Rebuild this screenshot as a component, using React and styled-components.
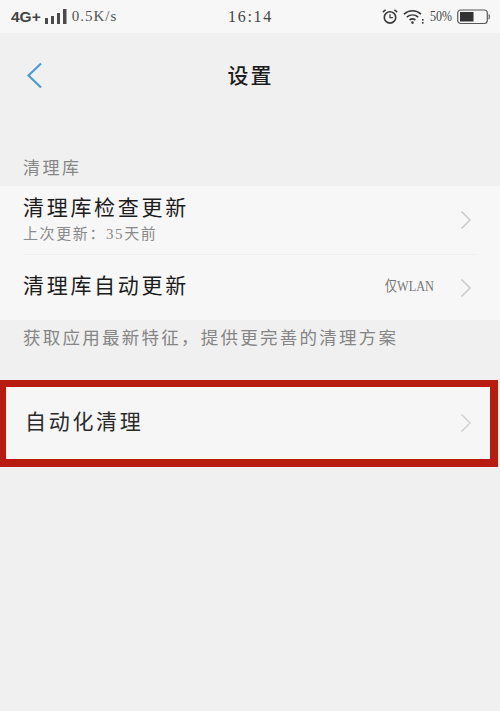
import React from "react";
import styled, { createGlobalStyle } from "styled-components";

const LAST_UPDATE = "上次更新\uFF1A35天前";
const FOOTNOTE = "获取应用最新特征\uFF0C提供更完善的清理方案";

const GlobalStyle = createGlobalStyle`
  html, body {
    margin: 0;
    padding: 0;
    background: #f0f0f0;
  }
  body {
    font-family: "Liberation Serif", "Noto Sans CJK SC", serif;
  }
`;

function Chevron({ color = "#c9c9c9" }) {
  return (
    <ChevronSvg viewBox="0 0 12 20" fill="none" stroke={color} strokeWidth="1.5">
      <path d="M1.5 1.5 10 10 1.5 18.5" />
    </ChevronSvg>
  );
}

function SignalBars() {
  return (
    <svg width="23" height="16" viewBox="0 0 23 16" fill="#4a4a4a">
      <rect x="0" y="9" width="3" height="6" />
      <rect x="6" y="7" width="3" height="8" />
      <rect x="12" y="4" width="3" height="11" />
      <rect x="18" y="0" width="3.5" height="15" />
    </svg>
  );
}

function AlarmIcon() {
  return (
    <svg width="16" height="17" viewBox="0 0 18 18" fill="none" stroke="#3a3a3a" strokeWidth="1.8">
      <circle cx="9" cy="10" r="6.4" />
      <path d="M9 6.5V10.3H12.2" strokeWidth="1.4" />
      <path d="M1 4 4 1.4M17 4 14 1.4" strokeWidth="1.8" />
    </svg>
  );
}

function WifiIcon() {
  return (
    <svg width="21" height="16" viewBox="0 0 21 16" fill="none" stroke="#3a3a3a" strokeWidth="1.6">
      <path d="M1 5.2C6 .6 13 .6 18 5.2" />
      <path d="M3.8 8.2C7.2 5.2 11.8 5.2 15.2 8.2" />
      <path d="M6.6 11C8.4 9.6 10.6 9.6 12.4 11" />
      <circle cx="9.5" cy="13.6" r="1.3" fill="#3a3a3a" stroke="none" />
      <rect x="19" y="10" width="1.6" height="1.6" fill="#3a3a3a" stroke="none" />
      <rect x="19" y="13" width="1.6" height="1.6" fill="#3a3a3a" stroke="none" />
    </svg>
  );
}

function BatteryIcon() {
  return (
    <svg width="33" height="16" viewBox="0 0 33 16" fill="none">
      <rect x="0.7" y="1" width="29.6" height="13.5" rx="3" stroke="#5a5a5a" strokeWidth="1.2" />
      <rect x="3" y="3" width="13.5" height="9.5" fill="#333" />
      <path d="M31.6 5.5c1 .6 1 3.9 0 4.5" stroke="#5a5a5a" strokeWidth="1.2" />
    </svg>
  );
}

export default function App() {
  return (
    <Page>
      <GlobalStyle />
      <StatusBar>
        <StatusGroup>
          <Network>4G+</Network>
          <SignalBars />
          <Speed>0.5K/s</Speed>
        </StatusGroup>
        <Clock>16:14</Clock>
        <StatusRight>
          <AlarmIcon />
          <WifiIcon />
          <Percent>50%</Percent>
          <BatteryIcon />
        </StatusRight>
      </StatusBar>

      <NavBar>
        <BackButton>
          <svg width="17" height="27" viewBox="0 0 17 27" fill="none" stroke="#4a9ad8" strokeWidth="2.2">
            <path d="M15 1.5 2.5 13.5 15 25.5" />
          </svg>
        </BackButton>
        <Title>设置</Title>
      </NavBar>

      <SectionLabel>清理库</SectionLabel>
      <Group>
        <UpdateRow>
          <UpdateText>
            <RowTitle>清理库检查更新</RowTitle>
            <RowSub>{LAST_UPDATE}</RowSub>
          </UpdateText>
          <Chevron />
        </UpdateRow>
        <Divider />
        <AutoRow>
          <AutoText>
            <RowTitle>清理库自动更新</RowTitle>
          </AutoText>
          <RowValue>仅WLAN</RowValue>
          <Chevron />
        </AutoRow>
      </Group>
      <Footnote>{FOOTNOTE}</Footnote>

      <HighlightRow>
        <HighlightTitle>自动化清理</HighlightTitle>
        <Chevron color="#d2d2d2" />
      </HighlightRow>
    </Page>
  );
}

const Page = styled.div`
  width: 500px;
  height: 711px;
  overflow: hidden;
  background: #f0f0f0;
  color: #222;
`;

const StatusBar = styled.div`
  height: 33px;
  background: #f7f7f7;
  display: grid;
  grid-template-columns: 1fr auto 1fr;
  align-items: center;
  padding: 0 10px 0 11px;
  box-sizing: border-box;
`;

const StatusGroup = styled.div`
  display: flex;
  align-items: center;
  gap: 4px;
`;

const Network = styled.span`
  font: 600 15.5px "Liberation Sans", sans-serif;
  color: #444;
`;

const Speed = styled.span`
  font-size: 15px;
  color: #555;
  letter-spacing: 1px;
`;

const Clock = styled.span`
  font-size: 16px;
  color: #444;
  letter-spacing: 1.7px;
`;

const StatusRight = styled.div`
  display: flex;
  align-items: center;
  justify-content: flex-end;
  gap: 5px;
`;

const Percent = styled.span`
  display: inline-block;
  width: 22px;
  margin-left: 1px;
  font-size: 15px;
  color: #444;
  white-space: nowrap;
  transform: scaleX(0.8);
  transform-origin: left center;
`;

const NavBar = styled.div`
  height: 84px;
  position: relative;
  display: flex;
  align-items: center;
  justify-content: center;
`;

const BackButton = styled.div`
  position: absolute;
  left: 26px;
  top: 29px;
  line-height: 0;
`;

const Title = styled.h1`
  margin: 0 0 3px 1px;
  font: 500 21px "Noto Sans CJK SC", sans-serif;
  letter-spacing: 2px;
  color: #1c1c1c;
`;

const SectionLabel = styled.div`
  height: 69px;
  box-sizing: border-box;
  padding: 38px 0 0 23px;
  font: 400 17px/24px "Noto Sans CJK SC", sans-serif;
  letter-spacing: 2.5px;
  color: #868686;
`;

const Group = styled.div`
  background: #f7f7f7;
`;

const Row = styled.div`
  display: flex;
  align-items: center;
  padding: 0 28px 0 23px;
`;

const UpdateRow = styled(Row)`
  height: 68px;
`;

const AutoRow = styled(Row)`
  height: 65px;
`;

const UpdateText = styled.div`
  flex: 1;
  padding-bottom: 4px;
`;

const AutoText = styled.div`
  flex: 1;
  padding-bottom: 8px;
`;

const RowTitle = styled.div`
  font: 400 21px/28px "Noto Sans CJK SC", sans-serif;
  letter-spacing: 2.7px;
  color: #1c1c1c;
`;

const RowSub = styled.div`
  margin-top: 4px;
  font: 400 15px/20px "Liberation Serif", "Noto Sans CJK SC", serif;
  letter-spacing: 1.6px;
  color: #8a8a8a;
`;

const RowValue = styled.span`
  margin: 0 26px 6px 0;
  font: 400 15px "Liberation Serif", "Noto Sans CJK SC", serif;
  color: #777;
  transform: scaleX(0.82);
  transform-origin: right center;
`;

const Divider = styled.div`
  height: 1px;
  margin: 0 23px;
  background: #efefef;
`;

const Footnote = styled.div`
  height: 60px;
  box-sizing: border-box;
  padding: 4px 0 0 23px;
  font: 400 17.5px/26px "Noto Sans CJK SC", sans-serif;
  letter-spacing: 2.25px;
  color: #858585;
`;

const HighlightRow = styled.div`
  width: 498px;
  height: 87px;
  box-sizing: border-box;
  border: solid #b81c0e;
  border-width: 7px 8px 8px 6px;
  background: #f6f6f6;
  display: flex;
  align-items: center;
  justify-content: space-between;
  padding: 0 18px 0 19px;
`;

const HighlightTitle = styled.span`
  margin-bottom: 6px;
  font: 400 21px "Noto Sans CJK SC", sans-serif;
  letter-spacing: 2.7px;
  color: #2a2a2a;
`;

const ChevronSvg = styled.svg`
  width: 12px;
  height: 20px;
  flex: none;
`;
